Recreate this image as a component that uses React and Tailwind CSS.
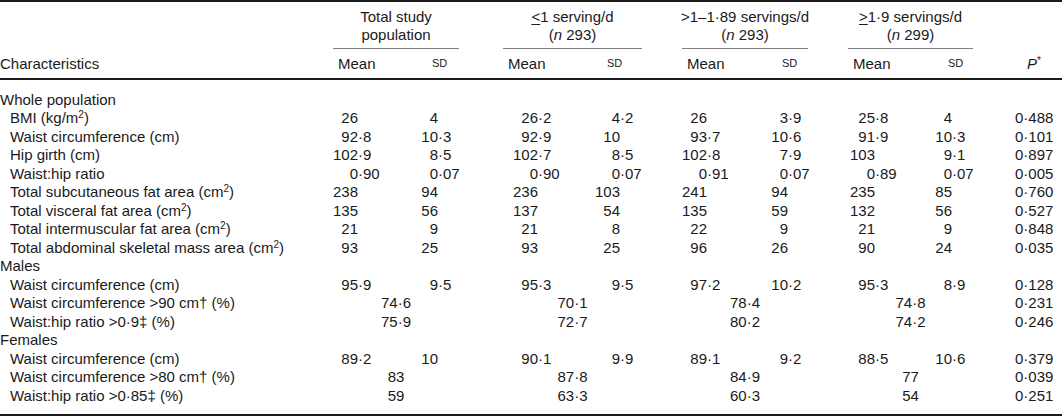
const GROUPS = [
  { head: ['Total study', 'population'], w: 'w-[126px]', ml: 'ml-0', meanW: 'w-[80px]', meanInt: 'w-[25px]', sdInt: 'w-[25px]', meanLbl: 'pl-[5px]', sdLbl: 'pl-[19px]' },
  { head: ['≤1 serving/d', '293'], w: 'w-[139px]', ml: 'ml-[44px]', meanW: 'w-[85px]', meanInt: 'w-[35px]', sdInt: 'w-[32px]', meanLbl: 'pl-[5px]', sdLbl: 'pl-[19px]' },
  { head: ['>1–1·89 servings/d', '293'], w: 'w-[126px]', ml: 'ml-[40px]', meanW: 'w-[80px]', meanInt: 'w-[25px]', sdInt: 'w-[26px]', meanLbl: 'pl-[5px]', sdLbl: 'pl-[20px]' },
  { head: ['≥1·9 servings/d', '299'], w: 'w-[125px]', ml: 'ml-[40px]', meanW: 'w-[80px]', meanInt: 'w-[27px]', sdInt: 'w-[24px]', meanLbl: 'pl-[5px]', sdLbl: 'pl-[20px]' },
];

const cm2 = (text) => (
  <>
    {text} (cm<sup className="text-[10px]">2</sup>)
  </>
);

const ROWS = [
  { section: 'Whole population' },
  { label: <>BMI (kg/m<sup className="text-[10px]">2</sup>)</>, vals: [['26', '4'], ['26·2', '4·2'], ['26', '3·9'], ['25·8', '4']], p: '0·488' },
  { label: 'Waist circumference (cm)', vals: [['92·8', '10·3'], ['92·9', '10'], ['93·7', '10·6'], ['91·9', '10·3']], p: '0·101' },
  { label: 'Hip girth (cm)', vals: [['102·9', '8·5'], ['102·7', '8·5'], ['102·8', '7·9'], ['103', '9·1']], p: '0·897' },
  { label: 'Waist:hip ratio', vals: [['0·90', '0·07'], ['0·90', '0·07'], ['0·91', '0·07'], ['0·89', '0·07']], p: '0·005' },
  { label: cm2('Total subcutaneous fat area'), vals: [['238', '94'], ['236', '103'], ['241', '94'], ['235', '85']], p: '0·760' },
  { label: cm2('Total visceral fat area'), vals: [['135', '56'], ['137', '54'], ['135', '59'], ['132', '56']], p: '0·527' },
  { label: cm2('Total intermuscular fat area'), vals: [['21', '9'], ['21', '8'], ['22', '9'], ['21', '9']], p: '0·848' },
  { label: cm2('Total abdominal skeletal mass area'), vals: [['93', '25'], ['93', '25'], ['96', '26'], ['90', '24']], p: '0·035' },
  { section: 'Males' },
  { label: 'Waist circumference (cm)', vals: [['95·9', '9·5'], ['95·3', '9·5'], ['97·2', '10·2'], ['95·3', '8·9']], p: '0·128' },
  { label: 'Waist circumference >90 cm† (%)', pct: ['74·6', '70·1', '78·4', '74·8'], p: '0·231' },
  { label: 'Waist:hip ratio >0·9‡ (%)', pct: ['75·9', '72·7', '80·2', '74·2'], p: '0·246' },
  { section: 'Females' },
  { label: 'Waist circumference (cm)', vals: [['89·2', '10'], ['90·1', '9·9'], ['89·1', '9·2'], ['88·5', '10·6']], p: '0·379' },
  { label: 'Waist circumference >80 cm† (%)', pct: ['83', '87·8', '84·9', '77'], p: '0·039' },
  { label: 'Waist:hip ratio >0·85‡ (%)', pct: ['59', '63·3', '60·3', '54'], p: '0·251' },
];

// decimal-aligned number: integer part right-aligned in a fixed box
function Num({ v, intW }) {
  const [int, frac] = v.split('·');
  return (
    <span className="flex whitespace-nowrap">
      <span className={`${intW} text-right shrink-0`}>{int}</span>
      {frac && <span>·{frac}</span>}
    </span>
  );
}

function GroupHead({ g, i }) {
  return (
    <div className={`${g.w} ${g.ml} shrink-0 border-b border-[#808080] pt-[6px] pb-[5px] text-center whitespace-nowrap`}>
      <div className="-mx-4">
        {i === 1 ? <><span className="underline decoration-1 underline-offset-2">&lt;</span>1 serving/d</> : i === 3 ? <><span className="underline decoration-1 underline-offset-2">&gt;</span>1·9 servings/d</> : g.head[0]}
      </div>
      <div>{i === 0 ? g.head[1] : <>(<i>n</i> {g.head[1]})</>}</div>
    </div>
  );
}

export default function App() {
  return (
    <div className="w-[1062px] h-[419px] bg-white text-[#1a1a1a] text-[15px] leading-[17.5px] [font-family:'Liberation_Sans',Arial,sans-serif]">
      <div className="border-t-2 border-[#1a1a1a]">
        {/* group headings */}
        <div className="flex items-end">
          <div className="w-[333px] shrink-0" />
          {GROUPS.map((g, i) => (
            <GroupHead key={i} g={g} i={i} />
          ))}
        </div>

        {/* column headings */}
        <div className="flex items-end pt-[6px] pb-[5px] border-b-2 border-[#1a1a1a]">
          <div className="w-[333px] shrink-0">Characteristics</div>
          {GROUPS.map((g, i) => (
            <div key={i} className={`${g.w} ${g.ml} shrink-0 flex`}>
              <div className={`${g.meanW} ${g.meanLbl} shrink-0`}>Mean</div>
              <div className={`${g.sdLbl} text-[11px]`}>SD</div>
            </div>
          ))}
          <div className="ml-[42px] w-[38px] shrink-0 text-center">
            <i>P</i><sup className="text-[10px]">*</sup>
          </div>
        </div>

        {/* body */}
        <div className="pt-[11px] pb-[8.5px] border-b-2 border-[#1a1a1a]">
          {ROWS.map((r, ri) =>
            r.section ? (
              <div key={ri} className="h-[18.5px] leading-[18.5px]">{r.section}</div>
            ) : (
              <div key={ri} className="flex h-[18.5px] leading-[18.5px]">
                <div className="w-[333px] shrink-0 pl-[10px] whitespace-nowrap">{r.label}</div>
                {GROUPS.map((g, gi) =>
                  r.vals ? (
                    <div key={gi} className={`${g.w} ${g.ml} shrink-0 flex`}>
                      <div className={`${g.meanW} shrink-0`}>
                        <Num v={r.vals[gi][0]} intW={g.meanInt} />
                      </div>
                      <div>
                        <Num v={r.vals[gi][1]} intW={g.sdInt} />
                      </div>
                    </div>
                  ) : (
                    <div key={gi} className={`${g.w} ${g.ml} shrink-0 text-center`}>
                      {r.pct[gi]}
                    </div>
                  )
                )}
                <div className="ml-[42px] w-[38px] shrink-0 text-center">{r.p}</div>
              </div>
            )
          )}
        </div>
      </div>
    </div>
  );
}
